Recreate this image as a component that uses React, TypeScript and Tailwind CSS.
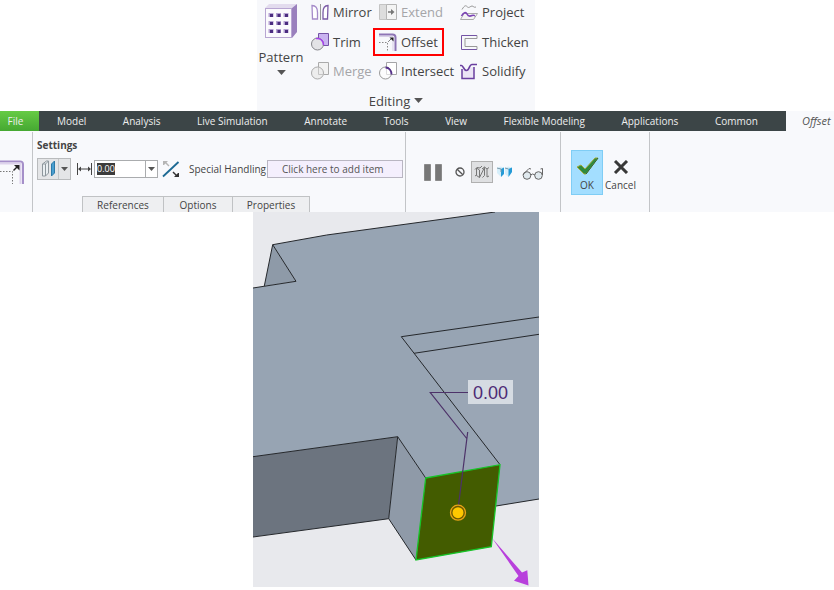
import type { ReactNode } from 'react'

const PURPLE = '#7b5ba6'

function Caret({ className = '', large }: { className?: string; large?: boolean }) {
  return (
    <svg className={className} width={large ? 9 : 7} height={large ? 5 : 4} viewBox="0 0 7 4" aria-hidden="true">
      <path d="M0 0h7L3.5 4z" fill="#555" />
    </svg>
  )
}

function Icon({ children }: { children: ReactNode }) {
  return (
    <svg className="shrink-0" width="18" height="18" viewBox="0 0 18 18" fill="none" aria-hidden="true">
      {children}
    </svg>
  )
}

function PatternIcon() {
  const cells = [0, 1, 2]
  return (
    <svg width="34" height="36" viewBox="0 0 34 36" aria-hidden="true">
      <path d="M1 5l4-4h28l-5 4z" fill="#e3dcee" />
      <path d="M28 5l5-4v28l-5 6z" fill="#9a80bd" />
      <rect x="1.5" y="5.5" width="26" height="29" fill="#fbfafd" stroke="#b8a6d2" />
      {cells.map((r) =>
        cells.map((c) => (
          <g key={`${r}-${c}`}>
            <rect x={4.5 + c * 7.5} y={10 + r * 8} width="5" height="4" fill="#b5a2d2" />
            <rect x={6 + c * 7.5} y={11 + r * 8} width="3" height="3" fill="#4b2c80" />
          </g>
        )),
      )}
    </svg>
  )
}

const icons = {
  mirror: (
    <Icon>
      <path d="M1 2.500c4 0 5.500 3 5.500 7v6.500H1.500z" fill="#fff" stroke="#a58bc9" strokeWidth="1.300" />
      <path d="M17 2.500c-4 0-5 3-5 7v6.500h4.500z" fill="#fff" stroke={PURPLE} strokeWidth="1.300" />
      <path d="M9.500 1v16" stroke="#999" />
    </Icon>
  ),
  trim: (
    <Icon>
      <path d="M7.500.5h10v12h-10z" fill="#c9b3f0" stroke="#7454a5" />
      <circle cx="6.500" cy="11" r="6" fill="#e3e3e6" stroke="#85858a" />
      <path d="M5 5.500c4.500-.5 7.500 2.500 7.500 6.500" stroke="#a63df0" strokeWidth="1.500" />
    </Icon>
  ),
  merge: (
    <Icon>
      <path d="M7.500.5h10v12h-10z" fill="#f2f2f2" stroke="#aaa" />
      <circle cx="6.500" cy="11" r="6" fill="#ededed" stroke="#aaa" />
      <path d="M7.500 6v6.500h5" stroke="#c4c4c4" />
    </Icon>
  ),
  extend: (
    <Icon>
      <path d="M.5 1.500h7v15h-7z" fill="#ddd" stroke="#c4c4c4" />
      <path d="M7.500 1.500h10v15h-10z" fill="#f4f4f4" stroke="#b5b5b5" />
      <path d="M9 9h4" stroke="#777" strokeWidth="1.500" />
      <path d="M12 6l3.500 3-3.500 3z" fill="#777" />
    </Icon>
  ),
  offset: (
    <Icon>
      <path d="M0 1.500h13.500q3 0 3 3V18" stroke="#8e74b5" strokeWidth="2" />
      <path d="M0 3.500h14V18" stroke="#d9cfe8" />
      <path d="M0 9.500h8.500V18" stroke="#888" strokeDasharray="1.500 1.500" />
      <path d="M9.500 8.500l3-3" stroke="#222" strokeDasharray="1.500 1" />
      <path d="M10.500 4.500h4v4z" fill="#222" />
    </Icon>
  ),
  intersect: (
    <Icon>
      <path d="M7.500.5h10v12h-10z" fill="#fff" stroke="#a5a5a8" />
      <circle cx="6.500" cy="11" r="6" fill="#fff" fillOpacity=".6" stroke="#999" />
      <path d="M6.500 5.500c3.500 0 6 3 6 7" stroke="#56318c" strokeWidth="1.800" />
    </Icon>
  ),
  project: (
    <Icon>
      <path d="M2 6.500c3-5 4-4 5.500-2.500s3-1 4.500-1 2 2 4 1" stroke="#999" />
      <path d="M4 10.500h13.500l-4 6H.5z" fill="#f4f4f4" stroke="#aaa" />
      <path d="M1.500 13c2-4 4.500-4 5.500-2s3 2.500 5 1.500 2 .5 3 0" stroke="#7b43b5" strokeWidth="1.600" />
    </Icon>
  ),
  thicken: (
    <Icon>
      <path d="M17 2.500H1.500v14H17" stroke="#7454a5" />
      <path d="M17 2.500v3H5v8h12v3" fill="none" stroke="#999" />
    </Icon>
  ),
  solidify: (
    <Icon>
      <path d="M2 7v9.500h12V5" fill="#ebe4f5" stroke="#6a3f9f" strokeWidth="1.500" />
      <path d="M0 3.500h1.500c2 0 2 5 5 5S9 2.500 12 2.500h5" fill="#f7f8fb" stroke="#6a3f9f" strokeWidth="1.700" />
    </Icon>
  ),
}

function Tool({ icon, label, disabled, active }: { icon: ReactNode; label: string; disabled?: boolean; active?: boolean }) {
  const frame = active ? 'border-[#f00]' : 'border-transparent'
  const tone = disabled ? 'text-[#a5a5a8]' : 'text-[#444]'
  return (
    <button
      type="button"
      disabled={disabled}
      className={`flex h-7 items-center gap-1 justify-self-start border-2 px-1 whitespace-nowrap ${frame} ${tone}`}
    >
      {icon}
      {label}
    </button>
  )
}

function EditingGroup() {
  return (
    <section aria-label="Editing" className="w-[278px] bg-[#f7f8fb] text-[13px] leading-4 text-[#444]">
      <div className="flex h-[86px]">
        <button type="button" className="flex w-12 flex-col items-center pt-[3px]">
          <PatternIcon />
          <span className="mt-[10px]">Pattern</span>
          <Caret large className="mt-[5px]" />
        </button>
        <div className="grid grid-cols-[68px_81px_auto] grid-rows-[24px_36px_22px] items-center">
          <Tool icon={icons.mirror} label="Mirror" />
          <Tool icon={icons.extend} label="Extend" disabled />
          <Tool icon={icons.project} label="Project" />
          <Tool icon={icons.trim} label="Trim" />
          <Tool icon={icons.offset} label="Offset" active />
          <Tool icon={icons.thicken} label="Thicken" />
          <Tool icon={icons.merge} label="Merge" disabled />
          <Tool icon={icons.intersect} label="Intersect" />
          <Tool icon={icons.solidify} label="Solidify" />
        </div>
      </div>
      <button type="button" className="flex h-[25px] w-full items-center justify-center gap-1 pt-1">
        Editing <Caret large />
      </button>
    </section>
  )
}

const TABS = ['Model', 'Analysis', 'Live Simulation', 'Annotate', 'Tools', 'View', 'Flexible Modeling', 'Applications', 'Common']

function TabBar() {
  return (
    <nav className="flex h-5 bg-[#f8f9fc] text-[10px] leading-4">
      <div className="flex flex-1 bg-[#3c4547] text-[#eee]">
        <button type="button" className="w-[39px] bg-gradient-to-b from-[#66cb45] to-[#45a832] pr-2 text-center">
          File
        </button>
        <div className="flex flex-1 items-center justify-between pr-7 pl-[18px]">
          {TABS.map((t) => (
            <button type="button" key={t} className="whitespace-nowrap">
              {t}
            </button>
          ))}
        </div>
      </div>
      <button type="button" className="w-12 pl-4 text-left text-[11px] text-[#555] italic">
        Offset
      </button>
    </nav>
  )
}

function Separator() {
  return <div className="w-px shrink-0 bg-[#c3c5c8]" />
}

function SettingsPanel() {
  return (
    <div className="flex w-[372px] shrink-0 flex-col pt-[5px] pl-1">
      <h2 className="font-bold">Settings</h2>
      <div className="mt-[5px] flex h-[22px] items-center">
        <button type="button" aria-label="Offset type" className="flex h-[22px] w-[34px] items-center border border-[#b9bbbd] bg-[#e4e5e7]">
          <svg width="20" height="20" viewBox="0 0 20 20" fill="none" aria-hidden="true">
            <path d="M4.500 5l4-3h2v12l-3 3h-3z" fill="#e9eef1" stroke="#8d969c" />
            <path d="M7.500 5h-3M7.500 17V5l3-3" stroke="#8d969c" />
            <path d="M13.500 5l3-3v12l-3 3z" fill="#4a9fd0" stroke="#2d7aa8" />
          </svg>
          <span className="flex h-full flex-1 items-center justify-center border-l border-[#c4c6c8]">
            <Caret />
          </span>
        </button>
        <svg className="ml-[6px]" width="15" height="14" viewBox="0 0 15 14" fill="none" aria-hidden="true">
          <path d="M.5 1v12M14.500 1v12M2 7h11" stroke="#444" />
          <path d="M1 7l3-2.500v5zM14 7l-3-2.500v5z" fill="#444" />
        </svg>
        <div className="ml-[2px] flex h-[18px] w-16 items-center border border-[#aaacae] bg-white pl-[2px]">
          <input aria-label="Offset value" defaultValue="0.00" className="h-3 w-[18px] bg-[#3b3b3b] text-[9px] leading-3 text-white outline-none" />
          <button type="button" aria-label="Recent values" className="ml-auto flex h-full w-3 items-center justify-center border-l border-[#aaacae]">
            <Caret />
          </button>
        </div>
        <button type="button" aria-label="Flip direction" className="ml-1">
          <svg width="18" height="18" viewBox="0 0 18 18" fill="none" aria-hidden="true">
            <path d="M1 16.500L16.500 2" stroke="#1d6a94" strokeWidth="1.800" />
            <path d="M1 1h5L4.500 2.500l3 3-1 1-3-3L2 5H1z" fill="#b5b5b5" />
            <path d="M17 17h-5l1.500-1.500-3-3 1-1 3 3L16 13h1z" fill="#333" />
          </svg>
        </button>
        <label htmlFor="special" className="ml-[9px] w-[78px] whitespace-nowrap">
          Special Handling
        </label>
        <input
          id="special"
          defaultValue="Click here to add item"
          className="h-[18px] w-[136px] border border-[#b9b6c2] bg-[#f4effd] pl-[14px] text-[#555] outline-none"
        />
      </div>
      <div className="mt-auto ml-[45px] flex h-4 self-start border-x border-t border-[#c0c2c4] bg-[#eeeff1]">
        <button type="button" className="w-20">References</button>
        <button type="button" className="w-[70px] border-x border-[#c0c2c4]">Options</button>
        <button type="button" className="w-[76px]">Properties</button>
      </div>
    </div>
  )
}

function PreviewPanel() {
  return (
    <div className="flex w-[154px] shrink-0 items-center pl-[18px]">
      <button type="button" aria-label="Pause">
        <svg width="18" height="17" viewBox="0 0 18 17" aria-hidden="true">
          <path d="M.5.5h6v16h-6zM11.500.5h6v16h-6z" fill="#777" stroke="#8a8a8a" />
        </svg>
      </button>
      <button type="button" aria-label="No preview" className="ml-[13px]">
        <svg width="10" height="10" viewBox="0 0 10 10" fill="none" stroke="#555" strokeWidth="1.300" aria-hidden="true">
          <circle cx="5" cy="5" r="4" />
          <path d="M2.200 2.200l5.600 5.600" />
        </svg>
      </button>
      <button type="button" aria-label="Unattached preview" className="ml-[6px] flex h-[22px] w-[22px] items-center justify-center border border-[#b0b0b0] bg-[#dfe0e2]">
        <svg width="16" height="14" viewBox="0 0 16 14" fill="none" stroke="#777" strokeWidth="1" aria-hidden="true">
          <path d="M1 4.500l2-2 3 .5 2-2M2.500 3v7.500l3 2V5l-3-2M5.500 12.500l5-10M10.500 2.500v8l-2 2M8 4l2.500-2 2.500 2v8M13 4l2-1.500M13 12l2-1M1 11l1.500-1" />
        </svg>
      </button>
      <button type="button" aria-label="Attached preview" className="ml-1">
        <svg width="15" height="12" viewBox="0 0 15 12" aria-hidden="true">
          <path d="M0 2l3-1.500 4 1v4L4 11 0 7z" fill="#d5eefa" />
          <path d="M4 3l3-1.500V8l-3 3z" fill="#249ad6" />
          <path d="M8 2l3-1.500 4 1V6l-3.500 5L8 8z" fill="#d5eefa" />
          <path d="M11.500 3L15 1.500V6l-3.500 5z" fill="#249ad6" />
          <path d="M0 2l4 1v3M8 2l3.500 1" stroke="#7a98a8" fill="none" />
        </svg>
      </button>
      <button type="button" aria-label="Verify" className="mt-[3px] ml-[10px]">
        <svg width="22" height="13" viewBox="0 0 22 13" fill="none" stroke="#666" aria-hidden="true">
          <circle cx="5" cy="8.500" r="3.800" fill="#e0e9ee" />
          <circle cx="16.500" cy="8.500" r="3.800" fill="#e0e9ee" />
          <path d="M8.500 8q2-2 4.500 0M1 7.500l6-6 2 .5M20.500 8V1.500l-2 .5" />
        </svg>
      </button>
    </div>
  )
}

function ConfirmPanel() {
  return (
    <div className="flex w-[88px] shrink-0 items-start gap-[2px] pt-[18px] pl-[10px]">
      <button type="button" className="flex h-[45px] w-8 flex-col items-center border border-[#7fcdf5] bg-[#a3deff] pt-[6px]">
        <svg width="23" height="18" viewBox="0 0 23 18" aria-hidden="true">
          <path d="M1 10l4-2 4 4L19 1h3L10 17H8z" fill="#2e8b3d" stroke="#a3a83c" strokeWidth="1" />
          <path d="M10 17L22 1" stroke="#28633a" />
        </svg>
        <span className="mt-[2px]">OK</span>
      </button>
      <button type="button" className="flex h-[45px] w-[31px] flex-col items-center pt-[10px]">
        <svg width="16" height="14" viewBox="0 0 16 14" fill="none" aria-hidden="true">
          <path d="M2 1l12 12M14 1L2 13" stroke="#383838" strokeWidth="3" />
        </svg>
        <span className="mt-[3px]">Cancel</span>
      </button>
    </div>
  )
}

function Ribbon() {
  return (
    <section aria-label="Offset settings" className="flex h-[81px] overflow-hidden bg-[#f8f9fc] pt-px text-[10px] leading-4 text-[#444]">
      <div className="w-8 shrink-0 pt-7">
        <svg width="24" height="24" viewBox="0 0 24 24" fill="none" aria-hidden="true">
          <path d="M0 1.500h20q3 0 3 3V24" stroke="#a58fc9" strokeWidth="2" />
          <path d="M0 3.500h20.500V24" stroke="#ddd3ec" strokeWidth="2" />
          <path d="M0 11.500h12.500V24" stroke="#777" strokeDasharray="1.500 1.500" />
          <path d="M13.500 10.500l4-4" stroke="#222" strokeWidth="1.500" />
          <path d="M14 5h5.500v5.500z" fill="#222" />
        </svg>
      </div>
      <Separator />
      <SettingsPanel />
      <Separator />
      <PreviewPanel />
      <Separator />
      <ConfirmPanel />
      <Separator />
    </section>
  )
}

function ModelView() {
  return (
    <svg width="286" height="375" viewBox="0 0 286 375" fill="none" role="img" aria-label="Solid model with offset face">
      <rect width="286" height="375" fill="#e8e9ed" />
      <path d="M0 76L43 69.300 19.700 32.700 73.700 23 242 0H286V287L243 294 172.700 266 144.700 224.700 0 244.700z" fill="#97a4b3" />
      <path d="M161 141.300L286 122.300V287L243 294 246.500 252z" fill="#9aa6b5" />
      <path d="M19.700 32.700L43 69.300 11.300 74z" fill="#8e9aa8" />
      <path d="M0 244.700L144.700 224.700 135.700 306.700 0 325z" fill="#6c747f" />
      <path d="M144.700 224.700L172.700 266 163 348 135.700 306.700z" fill="#8f9aa8" />
      <g stroke="#25282c">
        <path d="M0 76L43 69.300 19.700 32.700 73.700 23 242 0M19.700 32.700L11.300 74" />
        <path d="M286 105L148.300 124.700 246.500 252M161 141.300L286 122.300" />
        <path d="M0 244.700L144.700 224.700 172.700 266M144.700 224.700L135.700 306.700 163 348M135.700 306.700L0 325M243 294L286 287" />
      </g>
      <path d="M172.700 266L247 252.700 238.300 334.700 163 348z" fill="#435c00" stroke="#17c428" strokeWidth="1.300" />
      <path d="M215 180.500H177.300L213.700 226.500M214.700 220L205.300 295" stroke="#4d3269" strokeWidth="1.200" />
      <circle cx="205" cy="300.700" r="7.500" fill="#6b5a00" stroke="#e8a317" strokeWidth="1.300" />
      <circle cx="205" cy="300.700" r="5.500" fill="#ffc800" />
      <path d="M239 326L269 360.500 274.300 358.300 275.500 373.500 261 368.700 265.500 364z" fill="#b83fdc" />
      <rect x="215" y="168" width="45" height="24" fill="#d5dbe2" />
      <text x="220" y="186.500" fontSize="18" fill="#4d2a75" className="font-['Liberation_Sans',sans-serif]">
        0.00
      </text>
    </svg>
  )
}

export default function App() {
  return (
    <main className="min-h-screen bg-white font-['Open_Sans','Noto_Sans',sans-serif]">
      <div className="flex justify-center pr-[42px]">
        <EditingGroup />
      </div>
      <TabBar />
      <Ribbon />
      <div className="flex justify-center pr-[42px]">
        <ModelView />
      </div>
    </main>
  )
}
